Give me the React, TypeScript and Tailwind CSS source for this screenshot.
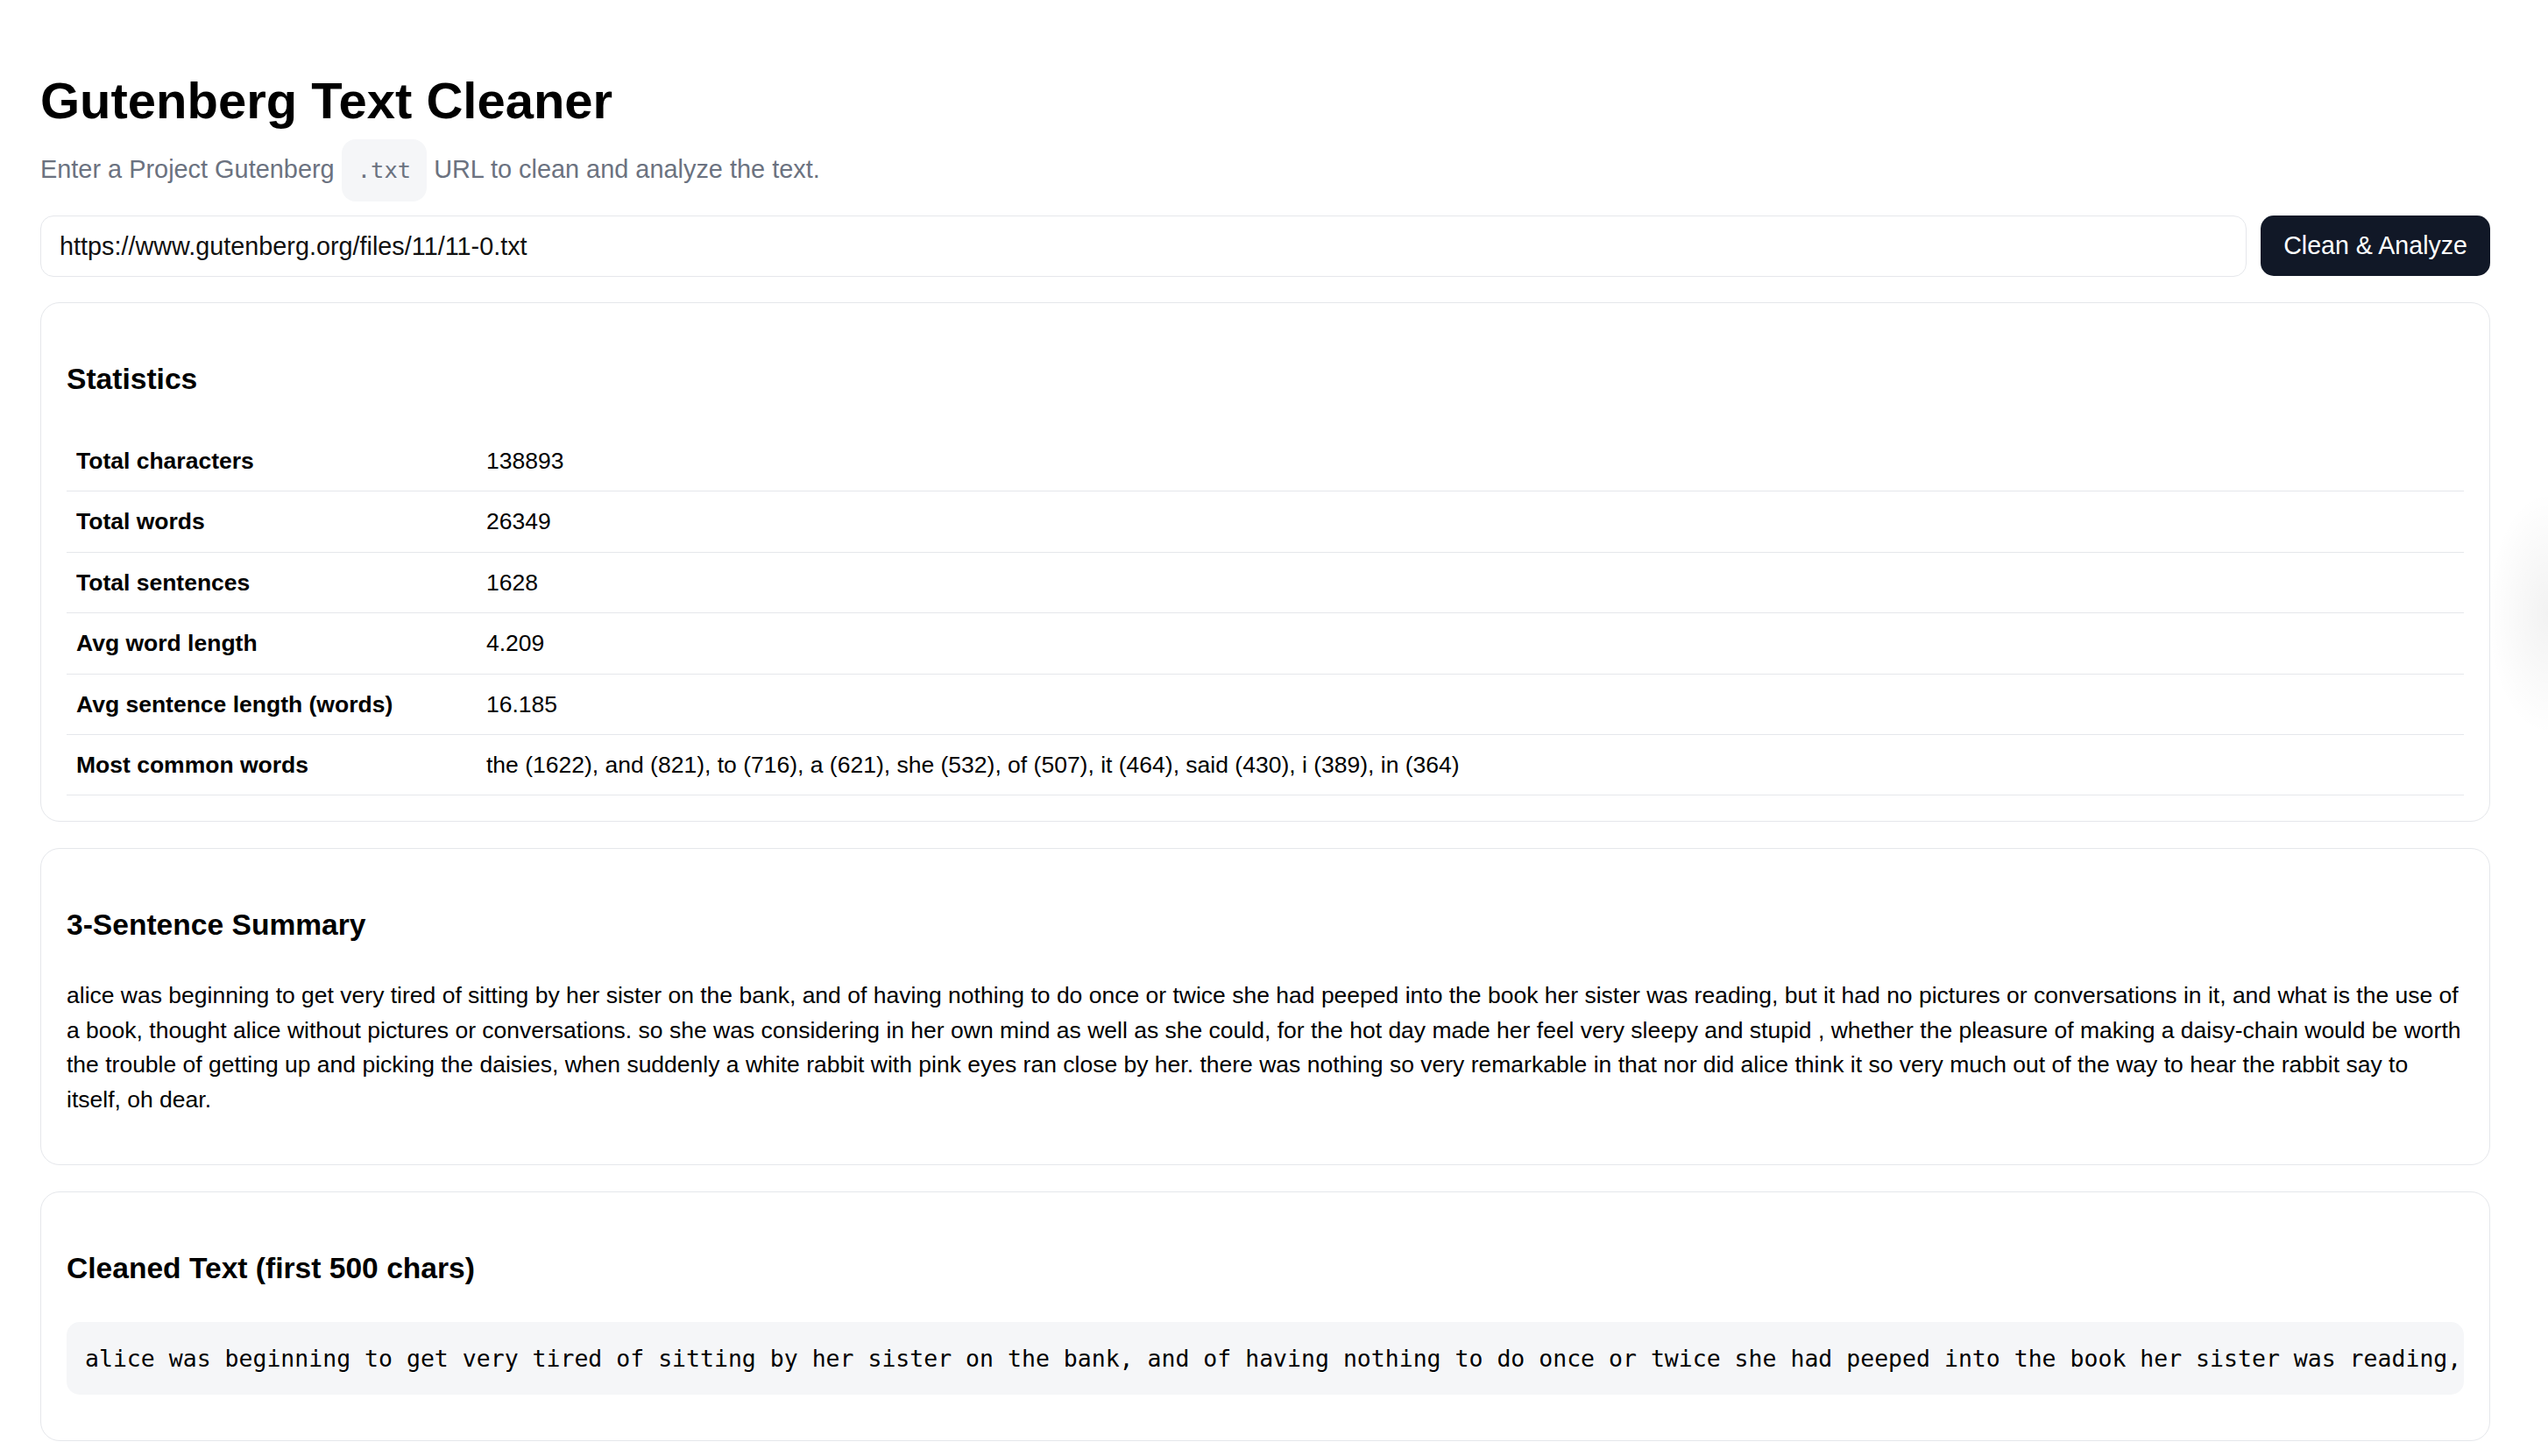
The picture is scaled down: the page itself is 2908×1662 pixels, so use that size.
const stats: [string, string][] = [
  ["Total characters", "138893"],
  ["Total words", "26349"],
  ["Total sentences", "1628"],
  ["Avg word length", "4.209"],
  ["Avg sentence length (words)", "16.185"],
  [
    "Most common words",
    "the (1622), and (821), to (716), a (621), she (532), of (507), it (464), said (430), i (389), in (364)",
  ],
];

const summaryLines = [
  "alice was beginning to get very tired of sitting by her sister on the bank, and of having nothing to do once or twice she had peeped into the book her sister was reading, but it had no pictures or conversations in it, and what is the use of",
  "a book, thought alice without pictures or conversations. so she was considering in her own mind as well as she could, for the hot day made her feel very sleepy and stupid , whether the pleasure of making a daisy-chain would be worth",
  "the trouble of getting up and picking the daisies, when suddenly a white rabbit with pink eyes ran close by her. there was nothing so very remarkable in that nor did alice think it so very much out of the way to hear the rabbit say to",
  "itself, oh dear.",
];

const cleaned =
  "alice was beginning to get very tired of sitting by her sister on the bank, and of having nothing to do once or twice she had peeped into the book her sister was reading, but it had no pictures or conversations in it, and what is the use of a book, thought alice without pictures or conversations. so she was considering in her own mind as well as she could, for the hot day made her feel very sleepy and stupid , whether the pleasure of making a daisy-chain would be worth the trouble of getting up";

const Card = ({
  title,
  children,
  className = "",
}: {
  title: string;
  children: React.ReactNode;
  className?: string;
}) => (
  <section
    className={`rounded-[22px] border border-[#e5e7eb] bg-white px-[29px] pt-[61px] ${className}`}
  >
    <h2 className="text-[33.6px] font-bold leading-[52px] text-black">{title}</h2>
    {children}
  </section>
);

export default function App() {
  return (
    <div className="relative min-h-screen overflow-hidden bg-white pl-[46px] pr-[66px] pt-[81px] pb-[10px] font-['Liberation_Sans',Arial,sans-serif] text-black">
      <h1 className="text-[58px] font-bold leading-[68px]">Gutenberg Text Cleaner</h1>
      <p className="mt-[10px] text-[28.9px] leading-[43px] text-[#6b7280]">
        Enter a Project Gutenberg{" "}
        <code className="inline-block rounded-[16px] bg-[#f5f6f8] px-[18px] py-[18px] font-['DejaVu_Sans_Mono','Liberation_Mono',monospace] text-[25.5px] leading-[35px] text-[#6b7280]">
          .txt
        </code>{" "}
        URL to clean and analyze the text.
      </p>

      <div className="mt-[16px] flex gap-[16px]">
        <input
          defaultValue="https://www.gutenberg.org/files/11/11-0.txt"
          className="h-[70px] flex-1 rounded-[15px] border border-[#e5e7eb] px-[21px] text-[28.8px] text-[#111] outline-none"
        />
        <button className="h-[69px] rounded-[15px] bg-[#111827] px-[26px] text-[28.6px] text-white">
          Clean &amp; Analyze
        </button>
      </div>

      <div className="mt-[29px] flex flex-col gap-[30px]">
        <Card title="Statistics" className="pb-[29px]">
          <table className="mt-[33px] w-full border-collapse text-[26.5px] leading-[36.4px]">
            <tbody>
              {stats.map(([label, value]) => (
                <tr key={label} className="border-b border-[#e5e7eb]">
                  <td className="w-[468px] py-[16px] pl-[11px] font-bold">{label}</td>
                  <td className="py-[16px] pl-[11px]">{value}</td>
                </tr>
              ))}
            </tbody>
          </table>
        </Card>

        <Card title="3-Sentence Summary" className="pb-[54px]">
          <p className="mt-[35px] whitespace-nowrap text-[26.5px] leading-[39.5px]">
            {summaryLines.map((line, i) => (
              <span key={i} className="block">
                {line}
              </span>
            ))}
          </p>
        </Card>

        <Card title="Cleaned Text (first 500 chars)" className="pb-[52px]">
          <pre className="mt-[35px] overflow-hidden whitespace-pre rounded-[15px] bg-[#f5f6f8] px-[21px] py-[22px] font-['DejaVu_Sans_Mono','Liberation_Mono',monospace] text-[26.5px] leading-[39px] text-black">
            {cleaned}
          </pre>
        </Card>
      </div>

      <div className="pointer-events-none absolute right-0 top-[560px] h-[280px] w-[70px] bg-[radial-gradient(ellipse_at_right,rgba(0,0,0,0.05),transparent_70%)]" />
    </div>
  );
}
